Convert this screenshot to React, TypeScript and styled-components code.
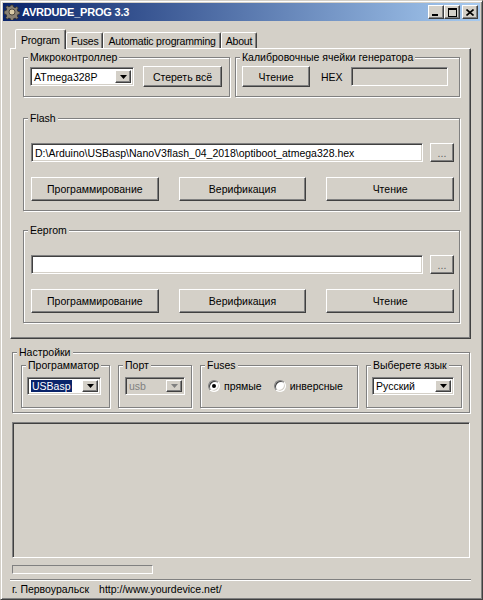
import React from 'react';
import styled, { createGlobalStyle, css } from 'styled-components';

const FACE = '#d4d0c8';

const GlobalStyle = createGlobalStyle`
  html, body {
    margin: 0;
    padding: 0;
    background: ${FACE};
  }
  body {
    font-family: 'Liberation Sans', Arial, sans-serif;
    font-size: 10.5px;
    color: #000;
  }
  * {
    box-sizing: border-box;
  }
`;

// classic 3D edges
const raised = css`
  border: 1px solid;
  border-color: #fff #404040 #404040 #fff;
  box-shadow: inset -1px -1px #808080;
`;

const sunken = css`
  border: 1px solid;
  border-color: #808080 #fff #fff #808080;
  box-shadow: inset 1px 1px #404040, inset -1px -1px ${FACE};
`;

const Window = styled.div`
  width: 483px;
  height: 600px;
  background: ${FACE};
  border: 1px solid;
  border-color: ${FACE} #404040 #404040 ${FACE};
  box-shadow: inset 1px 1px #fff, inset -1px -1px #808080;
  padding: 2px;
  display: flex;
  flex-direction: column;
`;

const TitleBar = styled.div`
  height: 18px;
  display: flex;
  align-items: center;
  padding: 0 2px 0 1px;
  background: linear-gradient(to right, #0a246a, #a6caf0);
  color: #fff;
`;

const Title = styled.span`
  flex: 1;
  margin-left: 2px;
  font-weight: bold;
  font-size: 11px;
  letter-spacing: -0.2px;
`;

const CapButton = styled.div<{ $gap?: boolean }>`
  width: 16px;
  height: 14px;
  background: ${FACE};
  ${raised};
  display: flex;
  align-items: center;
  justify-content: center;
  margin-left: ${p => (p.$gap ? 2 : 0)}px;
`;

const Body = styled.div`
  flex: 1;
  display: flex;
  flex-direction: column;
  padding: 8px 9px 0 7px;
`;

const TabList = styled.div`
  height: 19px;
  display: flex;
  align-items: flex-end;
  padding-left: 5px;
  position: relative;
  z-index: 1;
`;

const Tab = styled.div<{ $active?: boolean }>`
  height: ${p => (p.$active ? 20 : 16)}px;
  margin-bottom: ${p => (p.$active ? -1 : 0)}px;
  padding: 0 ${p => (p.$active ? 5 : 4)}px;
  background: ${FACE};
  border: 1px solid;
  border-bottom: none;
  border-color: #fff #404040 transparent #fff;
  border-radius: 2px 2px 0 0;
  box-shadow: inset -1px 0 #808080;
  display: flex;
  align-items: center;
  white-space: nowrap;
  letter-spacing: -0.2px;
`;

const Panel = styled.div`
  height: 291px;
  background: ${FACE};
  ${raised};
  padding: 8px 10px 0 12px;
  display: flex;
  flex-direction: column;
`;

const Row = styled.div<{ $gap?: number }>`
  display: flex;
  align-items: center;
  gap: ${p => p.$gap ?? 0}px;
`;

const GroupFrame = styled.div<{ $w?: number; $h: number; $mt?: number; $ml?: number; $pad: string }>`
  position: relative;
  flex-shrink: 0;
  width: ${p => (p.$w ? `${p.$w}px` : 'auto')};
  height: ${p => p.$h}px;
  margin-top: ${p => p.$mt ?? 0}px;
  margin-left: ${p => p.$ml ?? 0}px;
  padding: ${p => p.$pad};
  border: 1px solid #808080;
  box-shadow: inset 1px 1px #fff, 1px 1px #fff;
`;

const GroupCaption = styled.span`
  position: absolute;
  top: -7px;
  left: 4px;
  padding: 0 2px;
  line-height: 13px;
  background: ${FACE};
  white-space: nowrap;
`;

type GroupProps = {
  label: string;
  children?: React.ReactNode;
  $w?: number;
  $h: number;
  $mt?: number;
  $ml?: number;
  $pad: string;
};

const Group: React.FC<GroupProps> = ({ label, children, ...rest }) => (
  <GroupFrame {...rest}>
    <GroupCaption>{label}</GroupCaption>
    {children}
  </GroupFrame>
);

const Button = styled.div<{ $w?: number; $h: number; $muted?: boolean }>`
  width: ${p => (p.$w ? `${p.$w}px` : 'auto')};
  height: ${p => p.$h}px;
  flex-shrink: 0;
  background: ${FACE};
  ${raised};
  display: flex;
  align-items: center;
  justify-content: center;
  color: ${p => (p.$muted ? '#606060' : '#000')};
  white-space: nowrap;
`;

const TextField = styled.div<{ $w?: number; $readonly?: boolean }>`
  height: 19px;
  width: ${p => (p.$w ? `${p.$w}px` : 'auto')};
  flex: ${p => (p.$w ? '0 0 auto' : '1')};
  background: ${p => (p.$readonly ? FACE : '#fff')};
  ${sunken};
  padding: 0 3px;
  display: flex;
  align-items: center;
  white-space: nowrap;
  overflow: hidden;
`;

const Label = styled.span<{ $ml?: number; $mr?: number }>`
  margin-left: ${p => p.$ml ?? 0}px;
  margin-right: ${p => p.$mr ?? 0}px;
`;

const Combo = styled.div<{ $w: number; $h: number; $disabled?: boolean }>`
  width: ${p => p.$w}px;
  height: ${p => p.$h}px;
  flex-shrink: 0;
  background: ${p => (p.$disabled ? FACE : '#fff')};
  ${sunken};
  padding: 2px;
  display: flex;
  align-items: stretch;
`;

const ComboText = styled.span<{ $disabled?: boolean }>`
  flex: 1;
  display: flex;
  align-items: center;
  padding-left: 1px;
  color: ${p => (p.$disabled ? '#808080' : '#000')};
  white-space: nowrap;
  overflow: hidden;
`;

const Selection = styled.span`
  background: #0a246a;
  color: #fff;
  line-height: 14px;
  padding: 0 1px;
`;

const DropButton = styled.span`
  width: 16px;
  background: ${FACE};
  ${raised};
  display: flex;
  align-items: center;
  justify-content: center;
`;

const Actions = styled.div`
  display: grid;
  grid-template-columns: repeat(3, 1fr);
  gap: 20px;
  margin-top: 15px;
`;

const SettingsRow = styled.div`
  display: flex;
  gap: 8px;
`;

const RadioItem = styled.label`
  display: flex;
  align-items: center;
  gap: 4px;
  height: 18px;
`;

const RadioCircle = styled.span<{ $checked?: boolean }>`
  width: 12px;
  height: 12px;
  border-radius: 50%;
  border: 1px solid;
  border-color: #808080 #fff #fff #808080;
  box-shadow: inset 1px 1px #404040, inset -1px -1px ${FACE};
  background: #fff;
  display: flex;
  align-items: center;
  justify-content: center;

  &::after {
    content: '';
    width: 4px;
    height: 4px;
    border-radius: 50%;
    background: #000;
    display: ${p => (p.$checked ? 'block' : 'none')};
  }
`;

const LogArea = styled.div`
  width: 458px;
  height: 136px;
  margin: 9px 0 0 2px;
  background: ${FACE};
  ${sunken};
`;

const ProgressTrack = styled.div`
  width: 141px;
  height: 9px;
  margin: 7px 0 0 2px;
  border: 1px solid;
  border-color: #808080 #fff #fff #808080;
`;

const StatusBar = styled.div`
  height: 18px;
  margin-top: 5px;
  border-top: 1px solid #808080;
  box-shadow: inset 0 1px #fff;
  display: flex;
  align-items: center;
  gap: 10px;
  padding: 1px 0 0 2px;
`;

const Arrow: React.FC<{ color?: string }> = ({ color = '#000' }) => (
  <svg width="7" height="4" viewBox="0 0 7 4">
    <polygon points="0,0 7,0 3.5,4" fill={color} />
  </svg>
);

const AppIcon = () => (
  <svg width="16" height="16" viewBox="0 0 16 16">
    <path
      d="M7 1h2l.5 2 1.6.7 1.8-1.1 1.4 1.4-1.1 1.8.7 1.6 2 .5v2l-2 .5-.7 1.6 1.1 1.8-1.4 1.4-1.8-1.1-1.6.7-.5 2H7l-.5-2-1.6-.7-1.8 1.1-1.4-1.4 1.1-1.8-.7-1.6-2-.5V7l2-.5.7-1.6-1.1-1.8 1.4-1.4 1.8 1.1 1.6-.7z"
      fill="#8a8274"
      stroke="#34302a"
      strokeWidth="0.8"
    />
    <circle cx="8" cy="8" r="3" fill="#d9cba6" stroke="#34302a" strokeWidth="0.8" />
  </svg>
);

const MinGlyph = () => (
  <svg width="8" height="8" viewBox="0 0 8 8">
    <rect x="0" y="6" width="6" height="2" fill="#000" />
  </svg>
);

const MaxGlyph = () => (
  <svg width="9" height="9" viewBox="0 0 9 9">
    <path d="M0 0h9v9H0z M1 2v6h7V2z" fill="#000" fillRule="evenodd" />
  </svg>
);

const CloseGlyph = () => (
  <svg width="8" height="7" viewBox="0 0 8 7">
    <path d="M0.5 0.5 L7.5 6.5 M7.5 0.5 L0.5 6.5" stroke="#000" strokeWidth="1.6" />
  </svg>
);

type ComboProps = { w: number; h: number; disabled?: boolean; children: React.ReactNode };

const ComboBox: React.FC<ComboProps> = ({ w, h, disabled, children }) => (
  <Combo $w={w} $h={h} $disabled={disabled}>
    <ComboText $disabled={disabled}>{children}</ComboText>
    <DropButton>
      <Arrow color={disabled ? '#808080' : '#000'} />
    </DropButton>
  </Combo>
);

const FileGroup: React.FC<{ label: string; path?: string; mt: number }> = ({ label, path, mt }) => (
  <Group label={label} $h={93} $mt={mt} $pad="24px 5px 0 7px">
    <Row $gap={7}>
      <TextField>{path}</TextField>
      <Button $w={24} $h={19} $muted>
        ...
      </Button>
    </Row>
    <Actions>
      <Button $h={24}>Программирование</Button>
      <Button $h={24}>Верификация</Button>
      <Button $h={24}>Чтение</Button>
    </Actions>
  </Group>
);

export default function App() {
  return (
    <>
      <GlobalStyle />
      <Window>
        <TitleBar>
          <AppIcon />
          <Title>AVRDUDE_PROG 3.3</Title>
          <CapButton>
            <MinGlyph />
          </CapButton>
          <CapButton>
            <MaxGlyph />
          </CapButton>
          <CapButton $gap>
            <CloseGlyph />
          </CapButton>
        </TitleBar>

        <Body>
          <TabList>
            <Tab $active>Program</Tab>
            <Tab>Fuses</Tab>
            <Tab>Automatic programming</Tab>
            <Tab>About</Tab>
          </TabList>

          <Panel>
            <Row $gap={5}>
              <Group label="Микроконтроллер" $w={207} $h={40} $pad="8px 0 0 6px">
                <Row $gap={9}>
                  <ComboBox w={104} h={19}>
                    ATmega328P
                  </ComboBox>
                  <Button $w={79} $h={21}>
                    Стереть всё
                  </Button>
                </Row>
              </Group>
              <Group label="Калибровочные ячейки генератора" $w={225} $h={40} $pad="8px 0 0 6px">
                <Row>
                  <Button $w={68} $h={21}>
                    Чтение
                  </Button>
                  <Label $ml={11} $mr={8}>
                    HEX
                  </Label>
                  <TextField $w={97} $readonly />
                </Row>
              </Group>
            </Row>

            <FileGroup
              label="Flash"
              mt={21}
              path="D:\Arduino\USBasp\NanoV3flash_04_2018\optiboot_atmega328.hex"
            />
            <FileGroup label="Eeprom" mt={19} />
          </Panel>

          <Group label="Настройки" $w={458} $h={61} $mt={13} $ml={2} $pad="12px 0 0 8px">
            <SettingsRow>
              <Group label="Программатор" $w={89} $h={43} $pad="11px 0 0 5px">
                <ComboBox w={74} h={18}>
                  <Selection>USBasp</Selection>
                </ComboBox>
              </Group>
              <Group label="Порт" $w={74} $h={43} $pad="11px 0 0 6px">
                <ComboBox w={60} h={18} disabled>
                  usb
                </ComboBox>
              </Group>
              <Group label="Fuses" $w={158} $h={43} $pad="11px 0 0 7px">
                <Row $gap={12}>
                  <RadioItem>
                    <RadioCircle $checked />
                    прямые
                  </RadioItem>
                  <RadioItem>
                    <RadioCircle />
                    инверсные
                  </RadioItem>
                </Row>
              </Group>
              <Group label="Выберете язык" $w={96} $h={43} $pad="11px 0 0 5px">
                <ComboBox w={82} h={18}>
                  Русский
                </ComboBox>
              </Group>
            </SettingsRow>
          </Group>

          <LogArea />
          <ProgressTrack />

          <StatusBar>
            <span>г. Первоуральск</span>
            <span>http://www.yourdevice.net/</span>
          </StatusBar>
        </Body>
      </Window>
    </>
  );
}
